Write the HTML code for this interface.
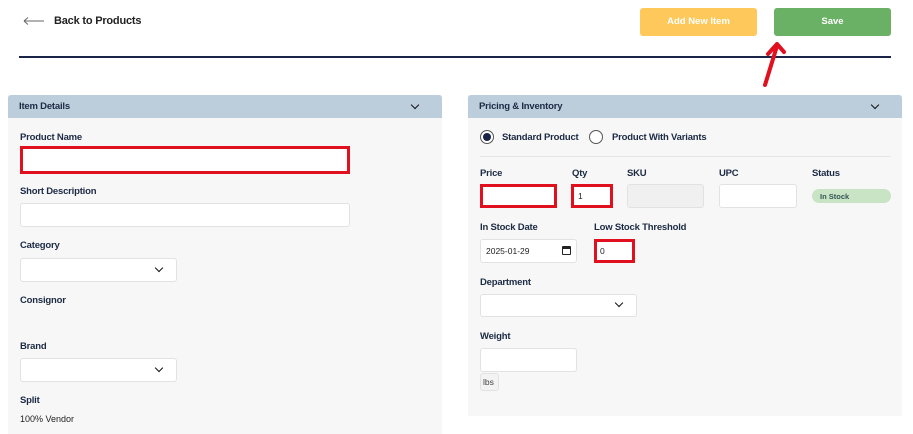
<!DOCTYPE html><html><head><style>
*{margin:0;padding:0;box-sizing:border-box}
body{width:913px;height:434px;overflow:hidden;background:#fff;font-family:"Liberation Sans",sans-serif;position:relative;color:#1a2540}
.a{position:absolute}
.l{position:absolute;font-size:9.5px;font-weight:bold;color:#1c2a44;line-height:12px;margin-top:1px;letter-spacing:-0.2px}
.in{position:absolute;background:#fff;border:1px solid #e2e2e2;border-radius:3px}
.red{border:3px solid #e0101e;border-radius:0}
.hd{position:absolute;height:23px;background:#bccddc;border-radius:3px 3px 0 0;font-size:9.5px;font-weight:bold;padding:6px 11px;color:#1c2a44;letter-spacing:-0.2px}
.pn{position:absolute;background:#f7f7f7}
.chev{position:absolute;width:6px;height:6px;border-right:1.6px solid #111;border-bottom:1.6px solid #111;transform:rotate(45deg)}
.btn{position:absolute;top:8px;height:28px;width:117px;border-radius:3px;color:#fff;font-size:9.5px;font-weight:bold;text-align:center;line-height:28px}
.t{position:absolute;font-size:9px;color:#222}
</style></head><body>
<svg class="a" style="left:23px;top:16px" width="22" height="10"><path d="M1 5H21M1 5L5 1.5M1 5L5 8.5" stroke="#666" stroke-width="1" fill="none"/></svg>
<div class="a" style="left:54px;top:15px;font-size:11px;font-weight:bold;color:#222;letter-spacing:-0.2px">Back to Products</div>
<div class="btn" style="left:640px;background:#fec85a">Add New Item</div>
<div class="btn" style="left:774px;background:#6ab065">Save</div>
<div class="a" style="left:19px;top:56px;width:872px;height:2px;background:#1a2448"></div>
<svg class="a" style="left:755px;top:38px" width="40" height="52"><path d="M10 47L22 8M13 16L22 6L29 14" stroke="#e0101e" stroke-width="4" fill="none" stroke-linecap="round" stroke-linejoin="round"/></svg>

<div class="pn" style="left:8px;top:95px;width:434px;height:339px"></div>
<div class="hd" style="left:8px;top:95px;width:434px">Item Details</div>
<div class="chev" style="left:412px;top:102px"></div>
<div class="l" style="left:20px;top:131px">Product Name</div>
<div class="in red" style="left:20px;top:146px;width:330px;height:28px"></div>
<div class="l" style="left:20px;top:185px">Short Description</div>
<div class="in" style="left:20px;top:203px;width:330px;height:24px"></div>
<div class="l" style="left:20px;top:239px">Category</div>
<div class="in" style="left:20px;top:258px;width:157px;height:24px"></div>
<div class="chev" style="left:156px;top:265px"></div>
<div class="l" style="left:20px;top:294px">Consignor</div>
<div class="l" style="left:20px;top:340px">Brand</div>
<div class="in" style="left:20px;top:358px;width:157px;height:24px"></div>
<div class="chev" style="left:156px;top:365px"></div>
<div class="l" style="left:20px;top:394px">Split</div>
<div class="t" style="left:20px;top:414px">100% Vendor</div>

<div class="pn" style="left:468px;top:95px;width:434px;height:321px"></div>
<div class="hd" style="left:468px;top:95px;width:434px">Pricing &amp; Inventory</div>
<div class="chev" style="left:872px;top:102px"></div>
<div class="a" style="left:480px;top:130px;width:14px;height:14px;border:1px solid #555;border-radius:50%;background:#fff"></div>
<div class="a" style="left:483px;top:133px;width:8px;height:8px;border-radius:50%;background:#1a2448"></div>
<div class="l" style="left:502px;top:131px">Standard Product</div>
<div class="a" style="left:589px;top:130px;width:14px;height:14px;border:1px solid #555;border-radius:50%;background:#fff"></div>
<div class="l" style="left:612px;top:131px">Product With Variants</div>
<div class="a" style="left:480px;top:156px;width:410px;height:1px;background:#e4e4e4"></div>
<div class="l" style="left:480px;top:167px">Price</div>
<div class="l" style="left:572px;top:167px">Qty</div>
<div class="l" style="left:627px;top:167px">SKU</div>
<div class="l" style="left:719px;top:167px">UPC</div>
<div class="l" style="left:812px;top:167px">Status</div>
<div class="in red" style="left:480px;top:184px;width:77px;height:24px"></div>
<div class="in red" style="left:571px;top:184px;width:42px;height:24px"></div>
<div class="t" style="left:578px;top:191px;font-size:8.5px">1</div>
<div class="in" style="left:627px;top:184px;width:77px;height:24px;background:#f0f0f0"></div>
<div class="in" style="left:719px;top:184px;width:78px;height:24px"></div>
<div class="a" style="left:812px;top:189px;width:79px;height:14px;border-radius:7px;background:#c9e4c5;font-size:7.5px;color:#355;padding:3px 8px;font-weight:bold">In Stock</div>
<div class="l" style="left:480px;top:221px">In Stock Date</div>
<div class="l" style="left:594px;top:221px">Low Stock Threshold</div>
<div class="in" style="left:480px;top:239px;width:97px;height:24px"></div>
<div class="t" style="left:486px;top:246px;font-size:8.5px">2025-01-29</div>
<div class="a" style="left:562px;top:246px;width:9px;height:9px;border:1.5px solid #222;border-top-width:3px;border-radius:1px"></div>
<div class="in red" style="left:594px;top:239px;width:41px;height:24px"></div>
<div class="t" style="left:600px;top:246px;font-size:8.5px">0</div>
<div class="l" style="left:480px;top:276px">Department</div>
<div class="in" style="left:480px;top:294px;width:157px;height:23px"></div>
<div class="chev" style="left:616px;top:300px"></div>
<div class="l" style="left:480px;top:330px">Weight</div>
<div class="in" style="left:480px;top:348px;width:97px;height:24px"></div>
<div class="in" style="left:480px;top:373px;width:19px;height:18px;background:#f3f3f3;font-size:8.5px;color:#444;padding:3px 2px">lbs</div>
</body></html>
